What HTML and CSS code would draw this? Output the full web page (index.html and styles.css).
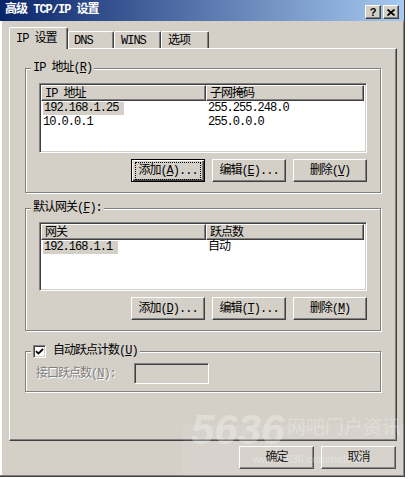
FILE: index.html
```html
<!DOCTYPE html>
<html lang="zh-CN">
<head>
  <meta charset="UTF-8">
  <meta name="viewport" content="width=device-width, initial-scale=1.0">
  <title>高级 TCP/IP 设置</title>
  <link rel="stylesheet" href="styles.css">
</head>
<body>
  <div id="dialog">
    <div class="titlebar">
      <span class="title">高级 TCP/IP 设置</span>
      <span class="capbtn help">?</span>
      <span class="capbtn close">
        <svg width="8" height="7" viewBox="0 0 8 7"><path d="M0.5 0.5 L7.5 6.5 M7.5 0.5 L0.5 6.5" stroke="#000" stroke-width="1.7" fill="none"/></svg>
      </span>
    </div>

    <div class="content">
      <div class="tabs">
        <div class="tab active">IP 设置</div>
        <div class="tab t-dns">DNS</div>
        <div class="tab t-wins">WINS</div>
        <div class="tab t-opt">选项</div>
      </div>

      <div class="panel">
        <fieldset class="group g-ip">
          <legend>IP 地址(<u>R</u>)</legend>
          <div class="listbox">
            <div class="list-head">
              <span class="hcell c1">IP 地址</span>
              <span class="hcell c2">子网掩码</span>
            </div>
            <div class="row"><span class="c1"><span class="sel">192.168.1.25</span></span><span class="c2">255.255.248.0</span></div>
            <div class="row"><span class="c1">10.0.0.1</span><span class="c2">255.0.0.0</span></div>
          </div>
          <div class="btnrow">
            <div class="btn default"><span class="focus">添加(<u>A</u>)...</span></div>
            <div class="btn">编辑(<u>E</u>)...</div>
            <div class="btn">删除(<u>V</u>)</div>
          </div>
        </fieldset>

        <fieldset class="group g-gw">
          <legend>默认网关(<u>F</u>):</legend>
          <div class="listbox">
            <div class="list-head">
              <span class="hcell c1">网关</span>
              <span class="hcell c2">跃点数</span>
            </div>
            <div class="row"><span class="c1"><span class="sel">192.168.1.1</span></span><span class="c2">自动</span></div>
          </div>
          <div class="btnrow">
            <div class="btn">添加(<u>D</u>)...</div>
            <div class="btn">编辑(<u>T</u>)...</div>
            <div class="btn">删除(<u>M</u>)</div>
          </div>
        </fieldset>

        <fieldset class="group g-metric">
          <legend>
            <span class="checkbox">
              <svg width="9" height="9" viewBox="0 0 9 9"><path d="M1 4.2 L3.4 6.6 L8 2" stroke="#000" stroke-width="1.8" fill="none"/></svg>
            </span>
            <span>自动跃点计数(<u>U</u>)</span>
          </legend>
          <div class="metric-row">
            <span class="disabled">接口跃点数(<u>N</u>):</span>
            <span class="textbox"></span>
          </div>
        </fieldset>
      </div>

      <div class="footer">
        <div class="btn">确定</div>
        <div class="btn">取消</div>
      </div>
    </div>

    <div class="watermark">
      <span class="wm-num">5636</span>
      <span class="wm-cn">网吧门户资讯</span>
      <span class="wm-url">www.5636.com/netbar/</span>
    </div>
  </div>
</body>
</html>
```

FILE: styles.css
```css
html {
  background: #fff;
}
body {
  margin: 0;
  font: 12px/14px "Liberation Mono", "Noto Sans CJK SC", monospace;
  letter-spacing: -1px;
  color: #000;
}
u {
  text-decoration: underline;
}

#dialog {
  position: relative;
  width: 405px;
  height: 477px;
  box-sizing: border-box;
  background: #d4d0c8;
  border-right: 1px solid #404040;
  border-bottom: 1px solid #404040;
  box-shadow: inset -1px -1px #808080, inset 2px 0 #fff;
  overflow: hidden;
}

/* title bar */
.titlebar {
  display: flex;
  align-items: flex-start;
  height: 21px;
  padding: 5px 5px 0 5px;
  box-sizing: border-box;
  background: linear-gradient(to right, #0a246a, #a6caf0);
}
.title {
  flex: 1;
  color: #fff;
  font-weight: bold;
  line-height: 13px;
  margin-top: -1px;
}
.capbtn {
  display: flex;
  align-items: center;
  justify-content: center;
  width: 16px;
  height: 14px;
  box-sizing: border-box;
  background: #d4d0c8;
  border: 1px solid;
  border-color: #fff #404040 #404040 #fff;
  box-shadow: inset -1px -1px #808080;
  font-weight: bold;
  font-family: "Liberation Sans", sans-serif;
  font-size: 11px;
  line-height: 12px;
  letter-spacing: 0;
}
.help {
  margin-right: 2px;
}

.content {
  padding-left: 9px;
}

/* tabs */
.tabs {
  display: flex;
  align-items: flex-end;
  height: 21px;
  margin-top: 6px;
  position: relative;
  z-index: 1;
}
.tab {
  height: 17px;
  box-sizing: border-box;
  padding: 2px 0 0 5px;
  border-top: 1px solid #fff;
  border-left: 1px solid #fff;
  border-right: 1px solid #404040;
  border-radius: 2px 2px 0 0;
  box-shadow: inset -1px 0 #808080;
}
.tab.active {
  width: 59px;
  height: 22px;
  margin-bottom: -1px;
  padding: 4px 0 0 6px;
  background: #d4d0c8;
}
.t-dns { width: 46px; }
.t-wins { width: 47px; padding-left: 6px; }
.t-opt { width: 48px; padding-left: 6px; }

/* tab page */
.panel {
  width: 388px;
  height: 393px;
  box-sizing: border-box;
  padding: 12px 0 0 15px;
  border: 1px solid;
  border-color: #fff #404040 #404040 #fff;
  box-shadow: inset -1px -1px #808080;
}

.group {
  width: 356px;
  box-sizing: border-box;
  margin: 0;
  padding: 8px 13px 10px;
  border: 1px solid #808080;
  box-shadow: inset 1px 1px #fff, 1px 1px #fff;
  min-width: 0;
}
.group legend {
  margin-left: -8px;
  padding: 0 2px;
  background: #d4d0c8;
  line-height: 14px;
}
.g-gw {
  margin-top: 8px;
  padding-top: 7px;
}
.g-metric {
  margin-top: 13px;
  padding: 5px 10px 7px;
}
.g-metric legend {
  display: flex;
  align-items: center;
  gap: 7px;
  margin-left: -5px;
}

/* list view */
.listbox {
  width: 328px;
  height: 70px;
  box-sizing: border-box;
  padding: 1px;
  background: #fff;
  border: 1px solid;
  border-color: #808080 #fff #fff #808080;
  box-shadow: inset 1px 1px #404040, inset -1px -1px #d4d0c8;
}
.g-gw .listbox {
  height: 69px;
}
.list-head {
  display: flex;
  height: 16px;
  margin-right: 1px;
}
.hcell {
  box-sizing: border-box;
  height: 16px;
  padding: 1px 0 0 3px;
  background: #d4d0c8;
  border: 1px solid;
  border-color: #fff #404040 #404040 #fff;
  box-shadow: inset -1px -1px #808080;
}
.row {
  display: flex;
  height: 14px;
}
.c1 {
  width: 165px;
  flex: none;
  padding-left: 3px;
  box-sizing: border-box;
}
.hcell.c2 {
  flex: 1;
}
.row .c1,
.row .c2 {
  padding-left: 2px;
}
.sel {
  display: inline-block;
  margin-top: 1px;
  line-height: 13px;
  padding: 0 6px 0 1px;
  background: #d4d0c8;
}

/* buttons */
.btnrow {
  display: flex;
  justify-content: flex-end;
  gap: 7px;
  margin-top: 6px;
}
.btn {
  width: 74px;
  height: 23px;
  box-sizing: border-box;
  display: flex;
  align-items: center;
  justify-content: center;
  border: 1px solid;
  border-color: #fff #404040 #404040 #fff;
  box-shadow: inset -1px -1px #808080;
}
.btn.default {
  border-color: #000;
  box-shadow: inset 1px 1px #fff, inset -1px -1px #404040, inset -2px -2px #808080;
}
.focus {
  outline: 1px dotted #000;
  outline-offset: 1px;
  padding: 0 1px;
}

/* metric */
.checkbox {
  display: flex;
  align-items: center;
  justify-content: center;
  width: 13px;
  height: 13px;
  box-sizing: border-box;
  background: #fff;
  border: 1px solid;
  border-color: #808080 #fff #fff #808080;
  box-shadow: inset 1px 1px #404040, inset -1px -1px #d4d0c8;
}
.metric-row {
  display: flex;
  align-items: center;
}
.disabled {
  width: 98px;
  color: #808080;
  text-shadow: 1px 1px #fff;
}
.textbox {
  width: 75px;
  height: 21px;
  box-sizing: border-box;
  border: 1px solid;
  border-color: #808080 #fff #fff #808080;
  box-shadow: inset 1px 1px #404040, inset -1px -1px #d4d0c8;
}

/* dialog buttons */
.footer {
  display: flex;
  justify-content: flex-end;
  gap: 7px;
  width: 387px;
  margin-top: 5px;
}
.footer .btn {
  width: 75px;
}

/* site watermark over the screenshot */
.watermark {
  position: absolute;
  left: 183px;
  top: 425px;
  width: 225px;
  height: 55px;
  background: rgba(255, 255, 255, 0.08);
  pointer-events: none;
}
.wm-num {
  position: absolute;
  left: 8px;
  top: -19px;
  font: italic bold 42px/48px "Liberation Sans", sans-serif;
  letter-spacing: 0;
  color: rgba(255, 255, 255, 0.3);
}
.wm-cn {
  position: absolute;
  left: 104px;
  top: -12px;
  font: 19px/26px "Noto Sans CJK SC", sans-serif;
  letter-spacing: 0;
  color: rgba(255, 255, 255, 0.28);
}
.wm-url {
  position: absolute;
  left: 70px;
  top: 27px;
  font: 11px/14px "Liberation Sans", sans-serif;
  letter-spacing: 0;
  color: rgba(255, 255, 255, 0.3);
}
```
